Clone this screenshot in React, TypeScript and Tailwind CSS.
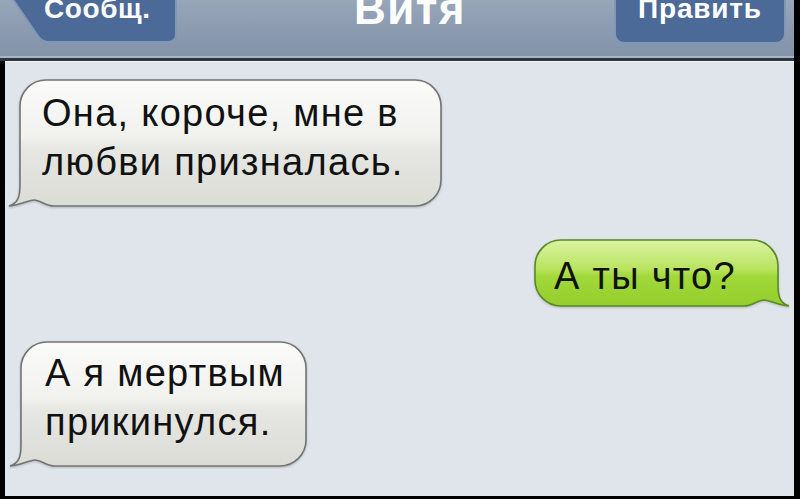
import { ReactNode } from "react";

type Tone = "gray" | "green";
type Side = "left" | "right";

const L = 12; // room for the tail
const R = 26; // corner radius

// bubble outline with a tail at the bottom-left, mirrored for right bubbles
const bubblePath = (w: number, h: number) =>
  [
    `M ${L + R} 1`,
    `H ${w - R - 1}`,
    `A ${R} ${R} 0 0 1 ${w - 1} ${R + 1}`,
    `V ${h - R - 1}`,
    `A ${R} ${R} 0 0 1 ${w - R - 1} ${h - 1}`,
    `H ${L + 34}`,
    `C ${L + 26} ${h - 1} ${L + 20} ${h - 7} ${L + 14} ${h - 7}`,
    `C ${L + 8} ${h - 7} ${L - 2} ${h - 1} 1 ${h - 1}`,
    `C ${L - 2} ${h - 4} ${L} ${h - 10} ${L} ${h - 22}`,
    `V ${R + 1}`,
    `A ${R} ${R} 0 0 1 ${L + R} 1`,
    "Z",
  ].join(" ");

const tones = {
  gray: {
    stops: ["#fbfbfa", "#f1f1ee", "#e6e6e2", "#dcdcd7"],
    stroke: "#747472",
  },
  green: {
    stops: ["#dcf3a4", "#b7e35c", "#a2d93a", "#94cd2c"],
    stroke: "#5a8a26",
  },
};

const Bubble = ({
  w,
  h,
  side,
  tone,
  className,
  children,
}: {
  w: number;
  h: number;
  side: Side;
  tone: Tone;
  className: string;
  children: ReactNode;
}) => {
  const t = tones[tone];
  const id = `fill-${tone}-${side}`;

  return (
    <div className={`relative shrink-0 ${className}`}>
      <svg
        className="absolute inset-0 drop-shadow-[0_1px_1px_rgba(0,0,0,0.2)]"
        width={w}
        height={h}
        viewBox={`0 0 ${w} ${h}`}
      >
        <defs>
          <linearGradient id={id} x1="0" y1="0" x2="0" y2="1">
            <stop offset="0" stopColor={t.stops[0]} />
            <stop offset="0.45" stopColor={t.stops[1]} />
            <stop offset="0.55" stopColor={t.stops[2]} />
            <stop offset="1" stopColor={t.stops[3]} />
          </linearGradient>
        </defs>
        <g transform={side === "right" ? `translate(${w} 0) scale(-1 1)` : undefined}>
          <path d={bubblePath(w, h)} fill={`url(#${id})`} stroke={t.stroke} strokeWidth="1.6" />
        </g>
      </svg>
      <div className="relative text-[38px] leading-[49px] tracking-[1.3px] text-[#111] font-['Liberation_Sans',Arial,sans-serif]">
        {children}
      </div>
    </div>
  );
};

const BackButton = () => (
  <div className="relative ml-[10px] h-[44px] w-[168px] shrink-0">
    <svg className="absolute inset-0" width="168" height="44" viewBox="0 0 168 44">
      <path
        d="M 2 -2 L 28 36 Q 32 42 40 42 H 158 Q 166 42 166 34 V -2 Z"
        fill="#4b6a98"
        stroke="#8097b8"
        strokeWidth="2"
      />
    </svg>
    <div className="relative -mt-[5px] pl-[34px] text-[28px] leading-none font-bold tracking-[0.6px] text-white">
      Сообщ.
    </div>
  </div>
);

export default function App() {
  return (
    <div className="flex h-[499px] w-[800px] flex-col overflow-hidden bg-black font-['Liberation_Sans',Arial,sans-serif]">
      {/* nav bar */}
      <div className="flex h-[58px] w-[794px] shrink-0 items-start overflow-hidden bg-gradient-to-b from-[#98a6b9] via-[#8c9bb0] to-[#8293aa] border-b-2 border-[#a9b5c5]">
        <BackButton />
        <div className="-mt-[13px] flex-1 pl-[28px] text-center text-[44px] leading-none font-bold tracking-[1.5px] text-white">
          Витя
        </div>
        <div className="mr-[8px] flex h-[44px] w-[172px] shrink-0 justify-center rounded-b-[10px] border-2 border-t-0 border-[#8097b8] bg-[#4b6a98]">
          <span className="-mt-[5px] text-[28px] leading-none font-bold tracking-[0.8px] text-white">Править</span>
        </div>
      </div>
      <div className="h-[3px] w-[794px] shrink-0 bg-[#2c3640]" />

      {/* messages */}
      <div className="mb-[3px] ml-[5px] mr-[6px] flex flex-1 flex-col border-t border-[#f3f5f7] bg-[#e0e5eb]">
        <Bubble w={434} h={128} side="left" tone="gray" className="ml-[3px] mt-[17px] h-[128px] w-[434px]">
          <div className="pl-[34px] pt-[10px]">
            Она, короче, мне в
            <br />
            любви призналась.
          </div>
        </Bubble>

        <Bubble w={256} h={68} side="right" tone="green" className="mr-[4px] mt-[32px] h-[68px] w-[256px] self-end">
          <div className="pl-[20px] pt-[13px]">А ты что?</div>
        </Bubble>

        <Bubble w={298} h={126} side="left" tone="gray" className="ml-[4px] mt-[34px] h-[126px] w-[298px]">
          <div className="pl-[36px] pt-[8px]">
            А я мертвым
            <br />
            прикинулся.
          </div>
        </Bubble>
      </div>
    </div>
  );
}
